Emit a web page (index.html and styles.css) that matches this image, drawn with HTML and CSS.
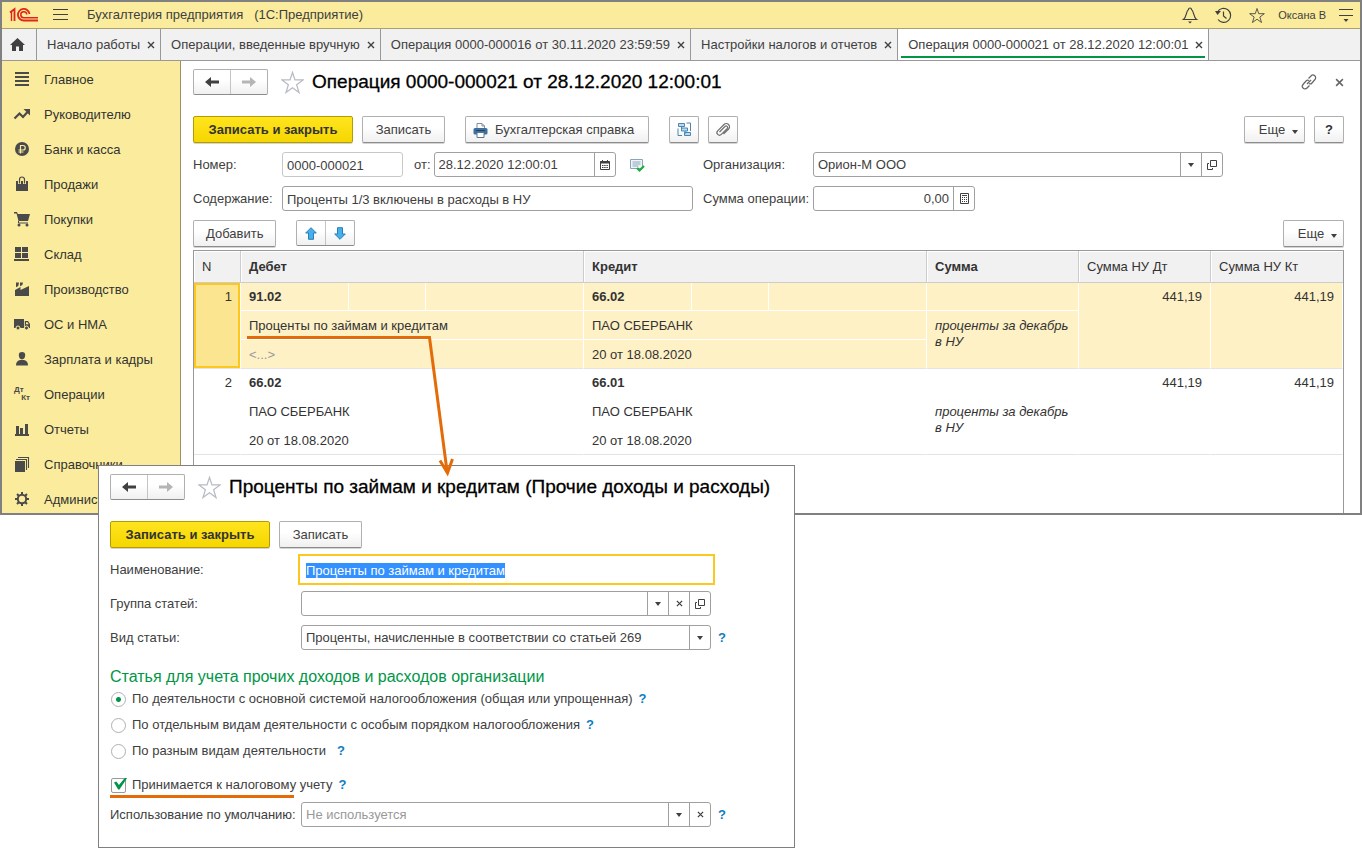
FILE: index.html
```html
<!DOCTYPE html>
<html lang="ru">
<head>
<meta charset="utf-8">
<title>Бухгалтерия предприятия</title>
<link rel="stylesheet" href="styles.css">
</head>
<body>
<svg class="defs" aria-hidden="true">
  <symbol id="i-left" viewBox="0 0 16 12"><path d="M1 6l6-5v3.600h8v2.800H7V11z" fill="currentColor"/></symbol>
  <symbol id="i-right" viewBox="0 0 16 12"><path d="M15 6L9 1v3.600H1v2.800h8V11z" fill="currentColor"/></symbol>
  <symbol id="i-star" viewBox="0 0 24 24"><path d="M12 1.500l2.600 7.800h8.400l-6.700 5 2.500 8.200L12 17.600 5.200 22.500l2.500-8.200L1 9.300h8.400z" fill="none" stroke="currentColor" stroke-width="1.300"/></symbol>
  <symbol id="i-x" viewBox="0 0 8 8"><path d="M1 1l6 6M7 1L1 7" stroke="currentColor" stroke-width="1.400"/></symbol>
  <symbol id="i-down" viewBox="0 0 6 4"><path d="M0 0h6L3 4z" fill="currentColor"/></symbol>
  <symbol id="i-open" viewBox="0 0 10 10"><path d="M3.500 .5h6v6h-6zM2 3.500H.5v6h5V8" fill="none" stroke="currentColor"/></symbol>
</svg>
<div class="stage">
<div class="app">
  <header class="titlebar">
    <svg class="logo" viewBox="0 0 30 16"><g fill="none" stroke="#e1251b"><path d="M1 5.500L5.500 2V14" stroke-width="1.800"/><path d="M2.500 5V14" stroke-width="1.400"/><path d="M20.500 7A5.800 5.800 0 1 0 15 13.500h14" stroke-width="1.800"/><path d="M17.800 7.500A3 3 0 1 0 15 10.700h14" stroke-width="1.500"/></g></svg>
    <button class="icon-btn" aria-label="Меню"><svg width="15" height="12" viewBox="0 0 15 12"><path d="M0 .5h15M0 5.500h15M0 10.500h15" stroke="currentColor"/></svg></button>
    <span class="app-name">Бухгалтерия предприятия &nbsp; (1С:Предприятие)</span>
    <div class="title-tools">
      <button class="icon-btn" aria-label="Оповещения"><svg width="16" height="17" viewBox="0 0 16 17"><path d="M1.500 12.500h13c-3-2-2.500-8.500-5-10a1.500 1.500 0 0 0-3 0c-2.500 1.500-2 8-5 10z" fill="none" stroke="currentColor" stroke-width="1.200"/><path d="M6 14.500h4l-2 2z" fill="currentColor"/></svg></button>
      <button class="icon-btn" aria-label="История"><svg width="17" height="17" viewBox="0 0 17 17"><path d="M2.500 5A7 7 0 1 1 3 12.500M8.500 4.500v4.500l3 2.500" fill="none" stroke="currentColor" stroke-width="1.200"/><path d="M0 4h6L2.500 8z" fill="currentColor"/></svg></button>
      <button class="icon-btn" aria-label="Избранное"><svg width="16" height="17"><use href="#i-star"/></svg></button>
      <span class="user">Оксана В</span>
      <button class="icon-btn" aria-label="Настройки"><svg width="14" height="14" viewBox="0 0 14 14"><path d="M0 1.500h14M0 7.500h14" stroke="currentColor" stroke-width="1.200"/><path d="M4.500 11h5L7 14z" fill="currentColor"/></svg></button>
    </div>
  </header>
  <nav class="tabs">
    <button class="tab home" aria-label="Начальная страница"><svg width="15" height="13" viewBox="0 0 15 13"><path d="M7.500 0L15 7h-2v6H9V8.500H6V13H2V7H0z" fill="currentColor"/></svg></button>
    <button class="tab">Начало работы<svg class="x"><use href="#i-x"/></svg></button>
    <button class="tab">Операции, введенные вручную<svg class="x"><use href="#i-x"/></svg></button>
    <button class="tab">Операция 0000-000016 от 30.11.2020 23:59:59<svg class="x"><use href="#i-x"/></svg></button>
    <button class="tab">Настройки налогов и отчетов<svg class="x"><use href="#i-x"/></svg></button>
    <button class="tab active">Операция 0000-000021 от 28.12.2020 12:00:01<svg class="x"><use href="#i-x"/></svg></button>
  </nav>
  <div class="body">
    <ul class="sidebar">
      <li><svg viewBox="0 0 16 16"><path d="M1 2h14M1 6h14M1 10h14M1 14h14" stroke="currentColor" stroke-width="2"/></svg><a href="#">Главное</a></li>
      <li><svg viewBox="0 0 16 16"><path d="M.5 12.500l5-5 3.500 3.500 4.500-5" fill="none" stroke="currentColor" stroke-width="2.200"/><path d="M9.500 3H16v6.500z" fill="currentColor"/></svg><a href="#">Руководителю</a></li>
      <li><svg viewBox="0 0 16 16"><circle cx="8" cy="8" r="7" fill="currentColor"/><path d="M6.500 12.500v-8H9a2.100 2.100 0 0 1 0 4.500H4.500M4.500 11h5" fill="none" stroke="#faec9c" stroke-width="1.200"/></svg><a href="#">Банк и касса</a></li>
      <li><svg viewBox="0 0 16 16"><path d="M2 5h12v10H2z" fill="currentColor"/><path d="M5.500 8V3.500a2.500 2.500 0 0 1 5 0V8" fill="none" stroke="#faec9c" stroke-width="3"/><path d="M5.500 7.500V3.500a2.500 2.500 0 0 1 5 0v4" fill="none" stroke="currentColor" stroke-width="1.200"/></svg><a href="#">Продажи</a></li>
      <li><svg viewBox="0 0 16 16"><path d="M0 1h3l.8 2H16l-2 7H4.500l-2-7.500H0z" fill="currentColor"/><path d="M4.500 10v2H14" fill="none" stroke="currentColor"/><circle cx="5" cy="14" r="1.500" fill="currentColor"/><circle cx="13" cy="14" r="1.500" fill="currentColor"/></svg><a href="#">Покупки</a></li>
      <li><svg viewBox="0 0 16 16"><path d="M1 1h6v5H1zM8 1h6v5H8zM1 7h6v5H1zM8 7h6v5H8zM0 13h15v2H0z" fill="currentColor"/></svg><a href="#">Склад</a></li>
      <li><svg viewBox="0 0 16 16"><path d="M1 9l5.500-3v3L15 5v10H1zM2 1.500h3L4.300 5 2 6.300zM6 1.500h3L8.300 4 6 5.200z" fill="currentColor"/></svg><a href="#">Производство</a></li>
      <li><svg viewBox="0 0 16 16"><path d="M0 3h10v9H0zM10.800 5H14l2 3v4h-5.200z" fill="currentColor"/><path d="M12 6.200h1.500l1.200 2H12z" fill="#faec9c"/><g fill="currentColor" stroke="#faec9c"><circle cx="4" cy="12" r="2"/><circle cx="12.500" cy="12" r="2"/></g></svg><a href="#">ОС и НМА</a></li>
      <li><svg viewBox="0 0 16 16"><path d="M8 1a3.200 3.200 0 0 1 3.200 3.300C11.200 6.500 10 8.500 8 8.500S4.800 6.500 4.800 4.300A3.200 3.200 0 0 1 8 1zM2 14.500c0-3 1-4.500 4-5.500h4c3 1 4 2.500 4 5.500z" fill="currentColor"/></svg><a href="#">Зарплата и кадры</a></li>
      <li><span class="dtkt" aria-hidden="true"><b>Дт</b><b>Кт</b></span><a href="#">Операции</a></li>
      <li><svg viewBox="0 0 16 16"><path d="M1 13h14v2H1zM2 5h3v8H2zM6 7h3v6H6zM11 3h3v10h-3z" fill="currentColor"/></svg><a href="#">Отчеты</a></li>
      <li><svg viewBox="0 0 16 16"><path d="M1 5h10v11H1z" fill="currentColor"/><path d="M2 3.500h10.500V14M4 1.500h10.500V12" fill="none" stroke="currentColor" stroke-width="1.100"/></svg><a href="#">Справочники</a></li>
      <li><svg viewBox="0 0 16 16"><circle cx="8" cy="8" r="4.200" fill="none" stroke="currentColor" stroke-width="2"/><path d="M8 1v3M8 12v3M1 8h3M12 8h3M3 3l2 2M11 11l2 2M3 13l2-2M11 5l2-2" stroke="currentColor" stroke-width="2"/></svg><a href="#">Администрирование</a></li>
    </ul>
    <main class="main">
      <div class="form-head">
        <div class="pair nav"><button aria-label="Назад"><svg width="16" height="12"><use href="#i-left"/></svg></button><button class="dim" aria-label="Вперед"><svg width="16" height="12"><use href="#i-right"/></svg></button></div>
        <button class="icon-btn fav" aria-label="В избранное"><svg width="23" height="23"><use href="#i-star"/></svg></button>
        <h1>Операция 0000-000021 от 28.12.2020 12:00:01</h1>
        <div class="head-tools">
          <button class="icon-btn" aria-label="Ссылка"><svg width="16" height="16" viewBox="0 0 16 16"><g fill="none" stroke="currentColor" stroke-width="1.200"><path d="M7.500 4.500L10 2a2.600 2.600 0 0 1 4 3.500L11 9a2.300 2.300 0 0 1-3 .5"/><path d="M8.500 11.500L6 14a2.600 2.600 0 0 1-4-3.500L5 7a2.300 2.300 0 0 1 3-.5"/><path d="M6 10l4-4"/></g></svg></button>
          <button class="icon-btn" aria-label="Закрыть"><svg width="9" height="9"><use href="#i-x"/></svg></button>
        </div>
      </div>
      <div class="bar">
        <button class="btn primary">Записать и закрыть</button>
        <button class="btn">Записать</button>
        <button class="btn print"><svg width="15" height="15" viewBox="0 0 15 15"><path d="M4 6V.5h5L11.500 3v3" fill="#fff" stroke="#7a8fa5"/><path d="M9 .5V3h2.500" fill="none" stroke="#7a8fa5"/><rect x=".5" y="5" width="14" height="6.500" rx="1.500" fill="#3f6f9c"/><path d="M3 7.500h9" stroke="#1f4468"/><path d="M4 9.500h7v5H4z" fill="#fff" stroke="#5a7590"/></svg>Бухгалтерская справка</button>
        <button class="btn square sep" aria-label="Структура подчиненности"><svg width="15" height="15" viewBox="0 0 15 15"><g fill="#b9dbef" stroke="#4a86b5"><path d="M1.500 1.500h6v3h-6zM4.500 6h6v3h-6zM7.500 10.500h6v3h-6z"/><path d="M9.500 1h4v8M1 6.500v7h4M4.500 5v2.500M8 9v3" fill="none"/></g></svg></button>
        <button class="btn square" aria-label="Файлы"><svg width="14" height="14" viewBox="0 0 14 14"><path d="M3.500 9l5.700-5.700a1.500 1.500 0 0 1 2.100 2.100l-6 6a2.500 2.500 0 0 1-3.600-3.600L8 1.500a3.200 3.200 0 0 1 4.600 4.500L7.500 11" fill="none" stroke="#6f6f6f" stroke-width="1.200"/></svg></button>
        <button class="btn more right">Еще <svg width="6" height="4"><use href="#i-down"/></svg></button>
        <button class="btn square q">?</button>
      </div>
      <div class="fields">
        <label for="num">Номер:</label>
        <div class="row">
          <input id="num" class="box num" value="0000-000021" readonly>
          <label for="date">от:</label>
          <div class="combo date"><input id="date" value="28.12.2020 12:00:01"><button aria-label="Календарь"><svg width="10" height="10" viewBox="0 0 10 10"><path d="M.5 1.500h9v8h-9z" fill="none" stroke="currentColor"/><path d="M0 2.500h10" stroke="currentColor" stroke-width="2"/><path d="M2.500 0v2M7.500 0v2M2 5.500h6M2 7.500h6" stroke="currentColor" stroke-dasharray="1.500 .7"/></svg></button></div>
          <svg width="16" height="14" viewBox="0 0 16 14"><path d="M1.500 1.500h12v9h-12z" fill="#eef4f8" stroke="#8aa4b8"/><path d="M3.500 4h8M3.500 6h8M3.500 8h6" stroke="#8aa4b8"/><path d="M8 10l2.500 2.500L15 8" fill="none" stroke="#1fae3c" stroke-width="2.200"/></svg>
        </div>
        <label for="org">Организация:</label>
        <div class="combo"><select id="org"><option>Орион-М ООО</option></select><span class="cell"><svg width="6" height="4"><use href="#i-down"/></svg></span><button aria-label="Открыть организацию"><svg width="10" height="10"><use href="#i-open"/></svg></button></div>
        <label for="desc">Содержание:</label>
        <input id="desc" class="box" value="Проценты 1/3 включены в расходы в НУ">
        <label for="sum">Сумма операции:</label>
        <div class="combo sum"><input id="sum" value="0,00"><button aria-label="Калькулятор"><svg width="9" height="11" viewBox="0 0 9 11"><path d="M.5 .5h8v10h-8z" fill="none" stroke="currentColor"/><path d="M2 2.500h5" stroke="currentColor"/><path d="M2 4.500h5M2 6.500h5M2 8.500h5" stroke="currentColor" stroke-dasharray="1 1"/></svg></button></div>
      </div>
      <div class="bar second">
        <button class="btn">Добавить</button>
        <div class="pair updown"><button aria-label="Вверх"><svg width="12" height="13" viewBox="0 0 12 13"><path d="M6 .7L11.300 6H8.500v6.300h-5V6H.7z" fill="#45b0ea" stroke="#2b7fb5"/></svg></button><button aria-label="Вниз"><svg width="12" height="13" viewBox="0 0 12 13"><path d="M6 12.300L.7 7h2.800V.7h5V7h2.800z" fill="#45b0ea" stroke="#2b7fb5"/></svg></button></div>
        <button class="btn more right">Еще <svg width="6" height="4"><use href="#i-down"/></svg></button>
      </div>
      <div class="grid-wrap">
        <table class="grid">
          <colgroup><col class="c-n"><col class="c-a"><col class="c-b"><col class="c-c"><col class="c-a"><col class="c-b"><col class="c-c"><col class="c-s"><col class="c-t"><col class="c-t"></colgroup>
          <thead><tr><th class="thin">N</th><th colspan="3">Дебет</th><th colspan="3">Кредит</th><th>Сумма</th><th class="thin">Сумма НУ Дт</th><th class="thin">Сумма НУ Кт</th></tr></thead>
          <tbody class="sel">
            <tr><td rowspan="3" class="n">1</td><td class="b">91.02</td><td></td><td></td><td class="b">66.02</td><td></td><td></td><td></td><td rowspan="3" class="r">441,19</td><td rowspan="3" class="r">441,19</td></tr>
            <tr><td colspan="3">Проценты по займам и кредитам</td><td colspan="3">ПАО СБЕРБАНК</td><td rowspan="2" class="i">проценты за декабрь в НУ</td></tr>
            <tr><td colspan="3" class="mute">&lt;...&gt;</td><td colspan="3">20 от 18.08.2020</td></tr>
          </tbody>
          <tbody>
            <tr><td rowspan="3" class="n">2</td><td class="b">66.02</td><td></td><td></td><td class="b">66.01</td><td></td><td></td><td></td><td rowspan="3" class="r">441,19</td><td rowspan="3" class="r">441,19</td></tr>
            <tr><td colspan="3">ПАО СБЕРБАНК</td><td colspan="3">ПАО СБЕРБАНК</td><td rowspan="2" class="i">проценты за декабрь в НУ</td></tr>
            <tr><td colspan="3">20 от 18.08.2020</td><td colspan="3">20 от 18.08.2020</td></tr>
          </tbody>
        </table>
      </div>
    </main>
  </div>
</div>

<section class="dialog">
  <div class="form-head">
    <div class="pair nav"><button aria-label="Назад"><svg width="16" height="12"><use href="#i-left"/></svg></button><button class="dim" aria-label="Вперед"><svg width="16" height="12"><use href="#i-right"/></svg></button></div>
    <button class="icon-btn fav" aria-label="В избранное"><svg width="23" height="23"><use href="#i-star"/></svg></button>
    <h2>Проценты по займам и кредитам (Прочие доходы и расходы)</h2>
  </div>
  <div class="bar">
    <button class="btn primary">Записать и закрыть</button>
    <button class="btn">Записать</button>
  </div>
  <div class="dlg-fields">
    <label for="name">Наименование:</label>
    <input id="name" class="focus-box" value="Проценты по займам и кредитам">
    <label for="grp">Группа статей:</label>
    <div class="combo"><select id="grp"><option></option></select><span class="cell"><svg width="6" height="4"><use href="#i-down"/></svg></span><button aria-label="Очистить группу"><svg width="7" height="7"><use href="#i-x"/></svg></button><button aria-label="Открыть группу"><svg width="10" height="10"><use href="#i-open"/></svg></button></div>
    <label for="kind">Вид статьи:</label>
    <div class="with-help"><div class="combo"><select id="kind"><option>Проценты, начисленные в соответствии со статьей 269</option></select><span class="cell"><svg width="6" height="4"><use href="#i-down"/></svg></span></div><button class="help">?</button></div>
  </div>
  <h3>Статья для учета прочих доходов и расходов организации</h3>
  <div class="choice"><input type="radio" name="act" id="r1" checked><label for="r1">По деятельности с основной системой налогообложения (общая или упрощенная)</label><button class="help">?</button></div>
  <div class="choice"><input type="radio" name="act" id="r2"><label for="r2">По отдельным видам деятельности с особым порядком налогообложения</label><button class="help">?</button></div>
  <div class="choice"><input type="radio" name="act" id="r3"><label for="r3">По разным видам деятельности</label><button class="help wide">?</button></div>
  <div class="choice tax"><input type="checkbox" id="tax" checked><label for="tax">Принимается к налоговому учету</label><button class="help">?</button></div>
  <div class="dlg-fields last">
    <label for="use">Использование по умолчанию:</label>
    <div class="with-help"><div class="combo"><select id="use" class="mute"><option>Не используется</option></select><span class="cell"><svg width="6" height="4"><use href="#i-down"/></svg></span><button aria-label="Очистить использование"><svg width="7" height="7"><use href="#i-x"/></svg></button></div><button class="help">?</button></div>
  </div>
</section>

<svg class="arrow" viewBox="0 0 350 470" fill="none" stroke="#e36c09" stroke-width="3"><path d="M147 7.500h182.500L347 141"/><path d="M340 130.500L347.500 143l5-14" /><path d="M10 466.500h184"/></svg>
</div>
<script src="app.js"></script>
</body>
</html>
```
FILE: styles.css
```css
* { box-sizing: border-box; }
body { margin: 0; background: #fff; color: #404040; font: 13px/16px "Liberation Sans", Arial, sans-serif; }
button, input, select { font: inherit; color: inherit; margin: 0; }
button { cursor: pointer; }
svg { display: block; flex: none; overflow: visible; }
.defs { display: none; }
.stage { position: relative; min-height: 848px; }
.app { border: 2px solid #808080; }

.titlebar { display: flex; align-items: center; height: 27px; padding: 0 7px; background: #faec9c; border-bottom: 1px solid #a9a16f; }
.logo { width: 30px; height: 16px; }
.icon-btn { border: 0; background: none; padding: 0; }
.logo + .icon-btn { margin: 0 19px 0 14px; }
.title-tools { display: flex; align-items: center; gap: 17px; margin-left: auto; }
.user { font-size: 11px; margin: 0 -4px; }

.tabs { display: flex; height: 32px; background: #f1f1f1; border-bottom: 1px solid #999; }
.tab { display: flex; align-items: center; gap: 7px; padding: 0 5px 0 10px; border: 0; border-right: 1px solid #999; background: none; white-space: nowrap; }
.tab.home { padding: 0 10px 0 8px; width: 35px; }
.tab .x { width: 8px; height: 8px; }
.tab.active { background: linear-gradient(#009646, #009646) center bottom 2px / calc(100% - 6px) 2px no-repeat #fff; }

.body { display: grid; grid-template-columns: 179px 1fr; }
.sidebar { list-style: none; margin: 0; padding: 10px 0 6px 12px; background: #faec9c; border-right: 1px solid #999266; display: flex; flex-direction: column; gap: 19px; }
.sidebar li { display: flex; gap: 14px; height: 16px; white-space: nowrap; color: #4a4a4a; }
.sidebar svg { width: 16px; height: 16px; }
.sidebar a { color: #333; text-decoration: none; line-height: 17px; }
.dtkt { width: 16px; font-size: 8px; line-height: 8px; display: grid; }
.dtkt b:last-child { text-align: right; }

.main { padding: 8px 16px 0 12px; display: flex; flex-direction: column; min-width: 0; }
.form-head { display: flex; align-items: center; height: 26px; }
.pair { display: flex; border: 1px solid #b0b0b0; border-bottom-color: #8c8c8c; border-radius: 2px; height: 26px; background: linear-gradient(#fff 40%, #f0f0f0); }
.pair button { flex: 1; border: 0; background: none; display: grid; place-items: center; padding: 0; }
.pair button + button { border-left: 1px solid #c4c4c4; }
.nav { width: 75px; }
.dim { color: #b5b5b5; }
.fav { margin: 0 8px 0 13px; color: #b5bcc4; }
h1, h2 { margin: 0; font-size: 19px; line-height: 24px; font-weight: 400; color: #000; white-space: nowrap; -webkit-text-stroke: 0.3px #000; }
.head-tools { margin-left: auto; display: flex; align-items: center; gap: 18px; color: #666; }

.bar { display: flex; margin-top: 21px; gap: 9px; }
.btn { height: 27px; padding: 1px 12px 0; border: 1px solid #b0b0b0; border-bottom-color: #8c8c8c; border-radius: 2px; box-shadow: 0 1px #d4d4d4; background: linear-gradient(#fff 40%, #f0f0f0); white-space: nowrap; min-width: 83px; }
.primary { width: 160px; padding: 1px 0 0; border-color: #b39c00; background: linear-gradient(#ffe51f, #f5d600); font-weight: 700; color: #333; }
.print { display: flex; align-items: center; gap: 7px; padding: 1px 7px 0; width: 184px; margin-left: 11px; }
.square { min-width: 30px; width: 30px; padding: 0; display: grid; place-items: center; }
.sep { margin-left: 11px; }
.q { font-weight: 700; color: #333; }
.more { display: flex; align-items: center; justify-content: center; gap: 7px; min-width: 61px; padding: 1px 4px 0 12px; }
.more svg { margin-top: 4px; }
.right { margin-left: auto; }
.updown { width: 59px; margin-left: 11px; }
.second { margin-top: 9px; }

.fields { display: grid; grid-template-columns: 89px 411px 120px 410px; row-gap: 9px; align-items: center; margin-top: 9px; }
.fields > label:nth-of-type(even) { padding-left: 10px; }
.row { display: flex; align-items: center; }
.row label { margin: 0 3px 0 11px; }
.row > svg { margin-left: 13px; }
.box, .combo { height: 25px; border: 1px solid #a0a0a0; border-radius: 3px; background: #fff; min-width: 0; }
.box { padding: 1px 4px 0; width: 100%; outline: 0; }
.num { width: 121px; border-color: #c8c8c8; }
.combo { display: flex; overflow: hidden; }
.combo input, .combo select { flex: 1; min-width: 0; border: 0; padding: 1px 4px 0; background: none; outline: 0; appearance: none; }
.combo button, .cell { flex: none; width: 21px; border: 0; border-left: 1px solid #a0a0a0; background: none; display: grid; place-items: center; padding: 0; }
.date { width: 182px; }
.sum { width: 162px; }
.sum input { text-align: right; }

.grid-wrap { margin-top: 3px; border: 1px solid #999; border-bottom: 0; flex: 1; }
.grid { width: 100%; table-layout: fixed; border-spacing: 0; color: #333; }
.c-n { width: 47px; } .c-a { width: 108px; } .c-b { width: 77px; } .c-c { width: 158px; } .c-s { width: 152px; } .c-t { width: 132px; }
.grid th { height: 32px; padding: 0 8px; text-align: left; background: #f1f1f1; border-right: 1px solid #ccc; border-bottom: 1px solid #ccc; box-shadow: inset 1px 1px #fff; }
.grid th:last-child { border-right: 0; }
.grid .thin { font-weight: 400; }
.grid td { height: 29px; padding: 7px 8px 5px; vertical-align: top; border-right: 1px solid transparent; border-bottom: 1px solid transparent; }
.grid tr:first-child td { height: 28px; padding: 6px 8px 5px; }
.grid td[rowspan="3"] { border-bottom-color: #e4e4e4; }
.grid td.i { padding-right: 0; border-bottom-color: #e4e4e4; font-style: italic; }
.grid tr:last-child td { border-bottom-color: #e4e4e4; }
.sel td { background: #fef1c5; border-color: #fff; }
.grid td.b { font-weight: 700; }
.grid td.r, .grid td.n { text-align: right; }
.sel td.n { background: #fce590; box-shadow: inset 0 0 0 2px #fcc81e; }
.mute { color: #999; }

.dialog { position: absolute; left: 98px; top: 465px; width: 697px; padding: 8px 11px 20px; border: 1px solid #808080; background: #fff; }
.dlg-fields { display: grid; grid-template-columns: 191px 410px; row-gap: 9px; align-items: center; margin-top: 9px; }
.dlg-fields > label { white-space: nowrap; }
.focus-box { height: 31px; width: 417px; margin: -3px; padding: 1px 6px 0; border: 2px solid #fcc81e; outline: 0; }
.focus-box::selection { background: #3390ff; color: #fff; }
.with-help { display: flex; align-items: center; gap: 7px; white-space: nowrap; }
.with-help .combo { flex: 0 0 410px; }
.help { border: 0; background: none; padding: 0; color: #0f7dc0; font-weight: 700; }
h3 { margin: 18px 0 5px; font-size: 16px; line-height: 18px; font-weight: 400; color: #009646; }
.choice { display: flex; align-items: center; gap: 6px; height: 16px; margin: 0 0 10px 1px; }
.choice input { appearance: none; flex: none; width: 15px; height: 15px; border: 1px solid #b0b0b0; border-radius: 50%; background: #fff; }
.choice input[type="radio"]:checked { background: radial-gradient(#009646 2px, #fff 3px); }
.choice input[type="checkbox"] { border-radius: 2px; border-color: #999; display: grid; overflow: visible; }
.choice input[type="checkbox"]::after { content: ""; width: 13px; height: 12px; margin: -1px 0 0 2px; background: #009646; clip-path: polygon(0 42%, 18% 34%, 38% 62%, 86% 0, 100% 6%, 42% 100%, 32% 100%); }
.wide { margin-left: 5px; }
.choice.tax { margin: 18px 0 9px 1px; }
.last { margin-top: 0; }

.arrow { position: absolute; left: 100px; top: 330px; width: 350px; height: 470px; pointer-events: none; }
```
FILE: app.js
```js
const nameField = document.getElementById("name");
nameField.focus({ preventScroll: true });
nameField.select();
```
